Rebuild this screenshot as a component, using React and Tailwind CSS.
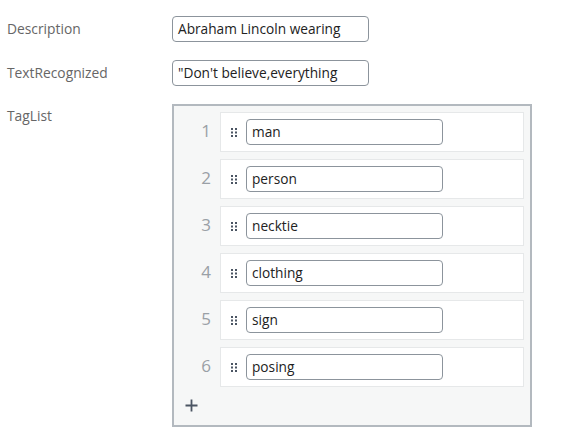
import React from "react";

const tags = ["man", "person", "necktie", "clothing", "sign", "posing"];

function Grip() {
  return (
    <svg width="6" height="9" viewBox="0 0 6 9" className="shrink-0">
      {[0, 3.5, 7].map((y) =>
        [0, 4].map((x) => (
          <rect key={`${x}-${y}`} x={x} y={y} width="2" height="2" fill="#4b5563" />
        ))
      )}
    </svg>
  );
}

function TextBox({ value, className = "" }) {
  return (
    <div
      className={`flex items-center h-[26px] w-[197px] border border-[#8c949c] rounded-[4px] bg-white pl-[5px] text-[13.7px] text-[#222] overflow-hidden whitespace-nowrap ${className}`}
    >
      {value}
    </div>
  );
}

export default function App() {
  return (
    <div
      className="w-[576px] h-[445px] bg-white relative"
      style={{ fontFamily: '"Open Sans", "Noto Sans", sans-serif' }}
    >
      <div className="grid grid-cols-[172px_1fr] pt-[16px]">
        <div className="pl-[7px] text-[13.8px] text-[#666] leading-[26px]">Description</div>
        <div>
          <TextBox value="Abraham Lincoln wearing" />
        </div>
        <div className="pl-[7px] text-[13.8px] text-[#666] leading-[26px] mt-[18px]">TextRecognized</div>
        <div className="mt-[18px]">
          <TextBox value={"\"Don't believe,everything"} className="h-[25px]" />
        </div>
        <div className="pl-[7px] text-[13.8px] text-[#666] leading-[20px] mt-[20px]">TagList</div>
        <div className="mt-[18px] row-start-3 col-start-2">
          <div className="w-[360px] h-[323px] border-2 border-[#b3b9bf] bg-[#f6f7f7] pt-[6px] pr-[6px] flex flex-col">
            <div className="flex flex-col gap-[7px]">
              {tags.map((t, i) => (
                <div key={t} className="flex items-center">
                  <div className="w-[46px] text-center pl-[18px] text-[17px] text-[#9aa0a6] leading-none -mt-[3px]">
                    {i + 1}
                  </div>
                  <div className="flex-1 h-[40px] bg-white border border-[#e6e8e9] flex items-center pl-[10px] gap-[9px]">
                    <Grip />
                    <TextBox value={t} className="h-[25px]" />
                  </div>
                </div>
              ))}
            </div>
            <div className="pl-[11px] mt-[6px] h-[24px] flex items-center">
              <svg width="13" height="13" viewBox="0 0 13 13">
                <path d="M6.5 0.5v12M0.5 6.5h12" stroke="#4b5563" strokeWidth="1.8" />
              </svg>
            </div>
          </div>
        </div>
      </div>
    </div>
  );
}
